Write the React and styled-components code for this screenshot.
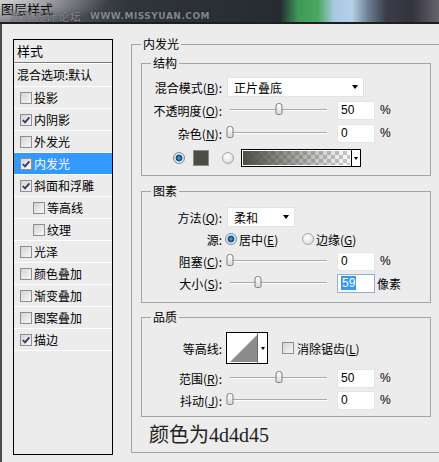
import React from 'react';
import styled, { createGlobalStyle } from 'styled-components';

const Global = createGlobalStyle`
  html, body { margin: 0; padding: 0; background: #ececec; }
  body {
    font-family: "Noto Sans CJK SC", "Liberation Sans", sans-serif;
    font-size: 12px;
    color: #000;
  }
`;

const Dialog = styled.div`
  position: relative;
  width: 439px;
  height: 462px;
  overflow: hidden;
  background: #ececec;
  display: flex;
  flex-direction: column;
`;

const TitleBar = styled.div`
  position: relative;
  flex: none;
  height: 22px;
  border-bottom: 2px solid #1d1e21;
  padding-left: 1px;
  background:
    radial-gradient(ellipse 110px 26px at 0px 0px, rgba(214, 214, 214, 0.95), rgba(214, 214, 214, 0) 100%),
    linear-gradient(90deg, #7d8086 0px, #4a4e55 70px, #30343b 130px, #262a31 280px, #3c9a55 298px, #4aa862 318px, #a8c8e2 334px, #b6d0e6 352px, #6d7f95 368px, #3b3d49 386px, #32333d 412px, #67646d 439px);
`;

const Title = styled.div`
  position: relative;
  font-size: 13px;
  line-height: 18px;
  color: #0a0a0a;
`;

const Watermark = styled.div`
  position: absolute;
  left: 10px;
  top: 11px;
  display: flex;
  align-items: center;
  gap: 8px;
  line-height: 11px;
  white-space: nowrap;
  color: rgba(150, 154, 160, 0.85);
  text-shadow: 0 0 1px rgba(30, 30, 30, 0.7);
`;

const WaterCn = styled.span`
  font-size: 11px;
  letter-spacing: 1px;
`;

const WaterEn = styled.span`
  font-family: "DejaVu Sans", sans-serif;
  font-size: 9px;
  font-weight: bold;
  letter-spacing: 0.5px;
`;

const Body = styled.div`
  flex: 1;
  display: flex;
  align-items: flex-start;
  border-left: 2px solid #4a4a4a;
`;

/* ---------- left style list ---------- */

const StylePanel = styled.div`
  box-sizing: border-box;
  flex: none;
  width: 100px;
  height: 416px;
  margin: 15px 0 0 11px;
  border: 1px solid #000;
  background: #ececec;
`;

const PanelHeader = styled.div`
  height: 22px;
  line-height: 22px;
  padding-left: 3px;
  font-size: 13px;
  border-bottom: 1px solid #7c7c7c;
`;

const BlendRow = styled.div`
  height: 22px;
  line-height: 22px;
  padding-left: 3px;
  border-top: 1px solid #fff;
  border-bottom: 1px solid #fff;
  white-space: nowrap;
`;

const StyleRow = styled.div`
  display: flex;
  align-items: center;
  gap: 2px;
  height: 21px;
  padding-left: ${(p) => (p.$indent ? 19 : 6)}px;
  border-bottom: 1px solid #fff;
  background: ${(p) => (p.$selected ? '#3399ff' : 'transparent')};
  color: ${(p) => (p.$selected ? '#fff' : '#000')};
  white-space: nowrap;
`;

const CheckBox = styled.span`
  box-sizing: border-box;
  flex: none;
  width: 12px;
  height: 12px;
  border: 1px solid #8e8e8e;
  background: linear-gradient(135deg, #d4d4d4, #f7f7f7);
  display: flex;
  align-items: center;
  justify-content: center;
`;

const Check = ({ checked }) => (
  <CheckBox>
    {checked && (
      <svg width="10" height="10" viewBox="0 0 10 10">
        <path d="M1.8 5 L4 7.4 L8.4 2.4" fill="none" stroke="#2c3d6b" strokeWidth="1.8" />
      </svg>
    )}
  </CheckBox>
);

/* ---------- right side ---------- */

const Group = styled.fieldset`
  box-sizing: border-box;
  margin: 0;
  padding: 0;
  min-width: 0;
  border: 1px solid #a4a4a4;
`;

const OuterGroup = styled(Group)`
  flex: none;
  width: 330px;
  height: 417px;
  margin: 12px 0 0 18px;
`;

const InnerGroup = styled(Group)`
  width: 290px;
  margin-top: ${(p) => p.$top}px;
`;

const Legend = styled.legend`
  margin-left: ${(p) => p.$offset}px;
  padding: 0 2px;
  height: 16px;
  line-height: 16px;
  font-size: 12px;
`;

const OuterContent = styled.div`
  display: flex;
  flex-direction: column;
  padding-left: 9px;
`;

const GroupBody = styled.div`
  display: flex;
  flex-direction: column;
  gap: ${(p) => p.$gap}px;
  padding: ${(p) => p.$pad};
`;

const Row = styled.div`
  display: flex;
  align-items: center;
  height: ${(p) => p.$h || 20}px;
  margin-top: ${(p) => p.$mt || 0}px;
  padding-left: ${(p) => p.$pl || 0}px;
  white-space: nowrap;
`;

const Label = styled.div`
  flex: none;
  width: 80px;
  margin-right: ${(p) => (p.$gap !== undefined ? p.$gap : 5)}px;
  text-align: right;
  white-space: nowrap;
`;

const Select = styled.div`
  box-sizing: border-box;
  flex: none;
  width: ${(p) => p.$w}px;
  height: 20px;
  display: flex;
  align-items: center;
  justify-content: space-between;
  padding: 0 5px 0 6px;
  background: #fff;
  border: 1px solid #e3e3e3;
`;

const Caret = styled.span`
  width: 0;
  height: 0;
  border-left: 3.5px solid transparent;
  border-right: 3.5px solid transparent;
  border-top: 4px solid #000;
`;

const SliderBox = styled.div`
  position: relative;
  flex: none;
  width: 103px;
  height: 20px;
  padding: 0 3px;
  box-sizing: border-box;
  display: flex;
  align-items: center;
`;

const Track = styled.div`
  position: relative;
  width: 100%;
  height: 0;
  border-top: 1px solid #a9a9a9;
  border-bottom: 1px solid #fdfdfd;
`;

const Thumb = styled.span`
  position: absolute;
  top: -7px;
  width: 7px;
  height: 12px;
  box-sizing: border-box;
  transform: translateX(-50%);
  border: 1px solid #7d7d7d;
  border-radius: 3px 3px 2px 2px;
  background: linear-gradient(180deg, #ffffff, #dadada);
`;

const Slider = ({ pct }) => (
  <SliderBox>
    <Track>
      <Thumb style={{ left: `${pct}%` }} />
    </Track>
  </SliderBox>
);

const NumField = styled.div`
  box-sizing: border-box;
  flex: none;
  width: 38px;
  height: 19px;
  margin-left: 7px;
  padding-left: 3px;
  display: flex;
  align-items: center;
  background: #fff;
  border: 1px solid ${(p) => (p.$focus ? '#8fb0d6' : '#e4e4e4')};
  font-family: "Liberation Sans", sans-serif;
  font-size: 12px;
`;

const Selected = styled.span`
  background: #3399ff;
  color: #fff;
  padding: 0 1px;
`;

const Unit = styled.span`
  margin-left: ${(p) => p.$ml || 5}px;
  font-family: "Liberation Sans", "Noto Sans CJK SC", sans-serif;
`;

const Radio = styled.span`
  box-sizing: border-box;
  flex: none;
  width: 12px;
  height: 12px;
  border-radius: 50%;
  border: 1px solid ${(p) => (p.$on ? '#7890a6' : '#a2a8ae')};
  background: ${(p) =>
    p.$on
      ? 'radial-gradient(circle at 50% 50%, #58aee6 0, #1c679f 28%, #0e3a64 44%, #dfe7ee 52%, #c4ccd4 100%)'
      : 'radial-gradient(circle at 40% 35%, #ffffff 0, #e8e8e8 55%, #c6c6c6 100%)'};
`;

const RadioOption = styled.div`
  display: flex;
  align-items: center;
  gap: 2px;
  width: ${(p) => (p.$w ? `${p.$w}px` : 'auto')};
`;

const Swatch = styled.span`
  box-sizing: border-box;
  flex: none;
  width: 16px;
  height: 16px;
  margin: 0 13px 0 8px;
  background: #4d4d45;
  border: 1px solid #888a86;
`;

const GradientPicker = styled.div`
  box-sizing: border-box;
  flex: none;
  width: 120px;
  height: 18px;
  margin-left: 7px;
  display: flex;
  border: 1px solid #000;
  background: #fff;
`;

const GradientFill = styled.div`
  flex: 1;
  margin: 1px;
  background:
    linear-gradient(90deg, #4d4d45, rgba(77, 77, 69, 0)),
    repeating-conic-gradient(#c9c9c9 0 25%, #ffffff 0 50%) 0 0 / 8px 8px;
`;

const PickerArrow = styled.div`
  flex: none;
  width: 8px;
  display: flex;
  align-items: center;
  justify-content: center;
  border-left: 1px solid #000;
  background: #fff;
`;

const SmallCaret = styled.span`
  width: 0;
  height: 0;
  border-left: 2.5px solid transparent;
  border-right: 2.5px solid transparent;
  border-top: 3px solid #000;
`;

const ContourBox = styled.div`
  box-sizing: border-box;
  flex: none;
  width: 42px;
  height: 32px;
  display: flex;
  border: 1px solid #000;
  background: #fff;
`;

const ContourPreview = styled.div`
  flex: 1;
  display: flex;
  padding: 2px 0 0 3px;
`;

const ContourArrow = styled.div`
  flex: none;
  width: 10px;
  display: flex;
  align-items: center;
  justify-content: center;
  border-left: 1px solid #6a6a6a;
`;

const CheckLabel = styled.div`
  display: flex;
  align-items: center;
  gap: 3px;
  margin-left: 14px;
`;

const Note = styled.div`
  margin: 6px 0 0 8px;
  height: 24px;
  line-height: 24px;
  font-family: "Liberation Serif", "Noto Sans CJK SC", serif;
  font-size: 20px;
  color: #222;
`;

const Key = styled.u`
  text-underline-offset: 1px;
`;

const styleItems = [
  { name: '投影', checked: false },
  { name: '内阴影', checked: true },
  { name: '外发光', checked: false },
  { name: '内发光', checked: true, selected: true },
  { name: '斜面和浮雕', checked: true },
  { name: '等高线', checked: false, indent: true },
  { name: '纹理', checked: false, indent: true },
  { name: '光泽', checked: false },
  { name: '颜色叠加', checked: false },
  { name: '渐变叠加', checked: false },
  { name: '图案叠加', checked: false },
  { name: '描边', checked: true },
];

const Lbl = ({ text, k, gap }) => (
  <Label $gap={gap}>
    {text}
    {k && (
      <>
        (<Key>{k}</Key>)
      </>
    )}
    :
  </Label>
);

const SliderRow = ({ text, k, pct, value, unit = '%', focus, mt }) => (
  <Row $mt={mt}>
    <Lbl text={text} k={k} />
    <Slider pct={pct} />
    <NumField $focus={focus}>{focus ? <Selected>{value}</Selected> : value}</NumField>
    <Unit $ml={unit === '%' ? 5 : 2}>{unit}</Unit>
  </Row>
);

export default function App() {
  return (
    <>
      <Global />
      <Dialog>
        <TitleBar>
          <Title>图层样式</Title>
          <Watermark>
            <WaterCn>思缘设计论坛</WaterCn>
            <WaterEn>WWW.MISSYUAN.COM</WaterEn>
          </Watermark>
        </TitleBar>
        <Body>
          <StylePanel>
            <PanelHeader>样式</PanelHeader>
            <BlendRow>混合选项:默认</BlendRow>
            {styleItems.map((it) => (
              <StyleRow key={it.name} $indent={it.indent} $selected={it.selected}>
                <Check checked={it.checked} />
                {it.name}
              </StyleRow>
            ))}
          </StylePanel>

          <OuterGroup>
            <Legend $offset={9}>内发光</Legend>
            <OuterContent>
              <InnerGroup $top={3}>
                <Legend $offset={9}>结构</Legend>
                <GroupBody $gap={3} $pad="6px 0 8px">
                  <Row>
                    <Lbl text="混合模式" k="B" />
                    <Select $w={137}>
                      <span>正片叠底</span>
                      <Caret />
                    </Select>
                  </Row>
                  <SliderRow text="不透明度" k="O" pct={50} value="50" />
                  <SliderRow text="杂色" k="N" pct={0} value="0" />
                  <Row $h={18} $mt={3} $pl={31}>
                    <Radio $on />
                    <Swatch />
                    <Radio />
                    <GradientPicker>
                      <GradientFill />
                      <PickerArrow>
                        <SmallCaret />
                      </PickerArrow>
                    </GradientPicker>
                  </Row>
                </GroupBody>
              </InnerGroup>

              <InnerGroup $top={7}>
                <Legend $offset={9}>图素</Legend>
                <GroupBody $gap={2} $pad="8px 0 9px">
                  <Row>
                    <Lbl text="方法" k="Q" />
                    <Select $w={68}>
                      <span>柔和</span>
                      <Caret />
                    </Select>
                  </Row>
                  <Row>
                    <Lbl text="源" gap={3} />
                    <RadioOption $w={77}>
                      <Radio $on />
                      <span>
                        居中(<Key>E</Key>)
                      </span>
                    </RadioOption>
                    <RadioOption>
                      <Radio />
                      <span>
                        边缘(<Key>G</Key>)
                      </span>
                    </RadioOption>
                  </Row>
                  <SliderRow text="阻塞" k="C" pct={0} value="0" />
                  <SliderRow text="大小" k="S" pct={29} value="59" unit="像素" focus />
                </GroupBody>
              </InnerGroup>

              <InnerGroup $top={6}>
                <Legend $offset={9}>品质</Legend>
                <GroupBody $gap={2} $pad="7px 0 6px">
                  <Row $h={32}>
                    <Lbl text="等高线" gap={4} />
                    <ContourBox>
                      <ContourPreview>
                        <svg width="27" height="27" viewBox="0 0 27 27">
                          <polygon points="0,27 27,0 27,27" fill="#8c8c8c" />
                        </svg>
                      </ContourPreview>
                      <ContourArrow>
                        <SmallCaret />
                      </ContourArrow>
                    </ContourBox>
                    <CheckLabel>
                      <Check checked={false} />
                      <span>
                        消除锯齿(<Key>L</Key>)
                      </span>
                    </CheckLabel>
                  </Row>
                  <SliderRow text="范围" k="R" pct={50} value="50" mt={2} />
                  <SliderRow text="抖动" k="J" pct={0} value="0" />
                </GroupBody>
              </InnerGroup>

              <Note>颜色为4d4d45</Note>
            </OuterContent>
          </OuterGroup>
        </Body>
      </Dialog>
    </>
  );
}
